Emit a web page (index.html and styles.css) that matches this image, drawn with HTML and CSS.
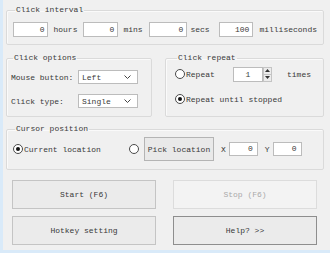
FILE: index.html
```html
<!DOCTYPE html>
<html lang="en">
<head>
    <meta charset="UTF-8">
    <title>Auto Clicker</title>
    <link rel="stylesheet" href="styles.css">
</head>
<body>
    <div class="window">
        <fieldset class="group interval">
            <legend>Click interval</legend>
            <div class="row">
                <div class="field w36">0</div><span class="unit u-hours">hours</span>
                <div class="field w36">0</div><span class="unit u-mins">mins</span>
                <div class="field w39">0</div><span class="unit u-secs">secs</span>
                <div class="field w35">100</div><span class="unit u-ms">milliseconds</span>
            </div>
        </fieldset>

        <div class="pair">
            <fieldset class="group options">
                <legend>Click options</legend>
                <div class="opt-row">
                    <span class="opt-label">Mouse button:</span>
                    <div class="select">Left<svg width="7" height="5" viewBox="0 0 7 5"><path d="M0.5 0.5 L3.5 3.5 L6.5 0.5" fill="none" stroke="#444" stroke-width="1"/></svg></div>
                </div>
                <div class="opt-row">
                    <span class="opt-label">Click type:</span>
                    <div class="select">Single<svg width="7" height="5" viewBox="0 0 7 5"><path d="M0.5 0.5 L3.5 3.5 L6.5 0.5" fill="none" stroke="#444" stroke-width="1"/></svg></div>
                </div>
            </fieldset>

            <fieldset class="group repeat">
                <legend>Click repeat</legend>
                <div class="rep-row">
                    <span class="radio"></span><span class="rep-label">Repeat</span>
                    <div class="spin">
                        <div class="field spin-field">1</div>
                        <div class="spin-btns">
                            <div class="spin-btn"><svg width="5" height="3" viewBox="0 0 5 3"><path d="M0 3 L2.5 0 L5 3 Z" fill="#333"/></svg></div>
                            <div class="spin-btn"><svg width="5" height="3" viewBox="0 0 5 3"><path d="M0 0 L2.5 3 L5 0 Z" fill="#333"/></svg></div>
                        </div>
                    </div>
                    <span class="times">times</span>
                </div>
                <div class="rep-row second">
                    <span class="radio checked"></span><span>Repeat until stopped</span>
                </div>
            </fieldset>
        </div>

        <fieldset class="group cursor">
            <legend>Cursor position</legend>
            <div class="cur-row">
                <span class="radio checked"></span><span class="cur-label">Current location</span>
                <span class="radio"></span>
                <button class="btn pick">Pick location</button>
                <span class="axis">X</span><div class="field xy">0</div>
                <span class="axis">Y</span><div class="field xy">0</div>
            </div>
        </fieldset>

        <div class="actions">
            <button class="btn big">Start (F6)</button>
            <button class="btn big" disabled>Stop (F6)</button>
            <button class="btn big">Hotkey setting</button>
            <button class="btn big default">Help? &gt;&gt;</button>
        </div>
    </div>
</body>
</html>
```

FILE: styles.css
```css
body {
    margin: 0;
    padding: 0;
    background: #f0f0f0;
    font-family: "Liberation Mono", "DejaVu Sans Mono", monospace;
    font-size: 8px;
    color: #3a3a3a;
}
.window {
    box-sizing: border-box;
    width: 330px;
    height: 253px;
    border-left: 3px solid #d9eaf9;
    border-bottom: 3px solid #d9eaf9;
    padding: 5px 0 0 3px;
    background: #f0f0f0;
}
.group {
    margin: 0;
    border: 1px solid #dadada;
    border-radius: 2px;
    box-shadow: inset 1px 1px 0 #fafafa;
    min-width: 0;
}
.group legend {
    padding: 0 1px;
    margin-left: 2px;
    line-height: 10px;
    height: 10px;
}
.interval {
    width: 318px;
    box-sizing: border-box;
    padding: 7px 6px 7px 6px;
}
.row {
    display: flex;
    align-items: center;
}
.field {
    box-sizing: border-box;
    height: 15px;
    background: #fff;
    border: 1px solid #bcbcbc;
    text-align: right;
    padding-right: 3px;
    line-height: 13px;
}
.w36 { width: 36px; }
.w39 { width: 39px; }
.w35 { width: 35px; }
.unit {
    box-sizing: border-box;
    padding-left: 5px;
}
.u-hours { width: 35px; }
.u-mins { width: 31px; }
.u-secs { width: 32px; padding-left: 3px; }
.u-ms { padding-left: 6px; }

.pair {
    display: flex;
    margin-top: 8px;
}
.options {
    box-sizing: border-box;
    width: 146px;
    height: 64px;
    padding: 7px 4px 0 4px;
}
.opt-row {
    display: flex;
    align-items: center;
    height: 14px;
    margin-bottom: 10px;
}
.opt-label {
    width: 67px;
}
.select {
    box-sizing: border-box;
    width: 60px;
    height: 14px;
    background: #fff;
    border: 1px solid #bcbcbc;
    display: flex;
    align-items: center;
    justify-content: space-between;
    padding: 0 6px 0 3px;
}
.repeat {
    box-sizing: border-box;
    width: 159px;
    height: 64px;
    margin-left: 13px;
    padding: 3px 4px 0 9px;
}
.rep-row {
    display: flex;
    align-items: center;
    height: 16px;
}
.rep-row.second {
    margin-top: 9px;
}
.radio {
    box-sizing: border-box;
    width: 10px;
    height: 10px;
    border: 1px solid #4a4a4a;
    border-radius: 50%;
    background: #fff;
    display: inline-flex;
    align-items: center;
    justify-content: center;
    flex: none;
    margin-right: 1px;
}
.radio.checked::after {
    content: "";
    width: 4px;
    height: 4px;
    border-radius: 50%;
    background: #111;
}
.rep-label {
    width: 47px;
}
.spin {
    display: flex;
    height: 15px;
}
.spin-field {
    width: 30px;
    text-align: center;
    padding-right: 0;
}
.spin-btns {
    display: flex;
    flex-direction: column;
    width: 9px;
}
.spin-btn {
    flex: 1;
    box-sizing: border-box;
    background: #ececec;
    border: 1px solid #c4c4c4;
    display: flex;
    align-items: center;
    justify-content: center;
}
.spin-btn + .spin-btn {
    border-top: none;
}
.times {
    margin-left: 15px;
}
.cursor {
    box-sizing: border-box;
    width: 318px;
    height: 46px;
    margin-top: 7px;
    padding: 3px 4px 0 6px;
}
.cur-row {
    display: flex;
    align-items: center;
    height: 24px;
}
.cur-label {
    width: 105px;
}
.btn {
    font-family: inherit;
    font-size: 8px;
    color: #3a3a3a;
    background: #e9e9e9;
    border: 1px solid #b4b4b4;
    border-radius: 0;
    padding: 0;
}
.pick {
    width: 70px;
    height: 24px;
    margin-left: 4px;
}
.axis {
    margin-left: 7px;
    margin-right: 3px;
}
.xy {
    width: 29px;
    height: 14px;
    line-height: 12px;
    padding-right: 4px;
}
.actions {
    display: grid;
    grid-template-columns: 144px 144px;
    grid-auto-rows: 29px;
    column-gap: 17px;
    row-gap: 7px;
    margin: 10px 0 0 6px;
}
.big {
    background: #ebebeb;
    border-color: #c4c4c4;
}
.big:disabled {
    background: #f3f3f3;
    border-color: #dcdcdc;
    color: #aaaaaa;
}
.big.default {
    border-color: #8e8e8e;
}
```
